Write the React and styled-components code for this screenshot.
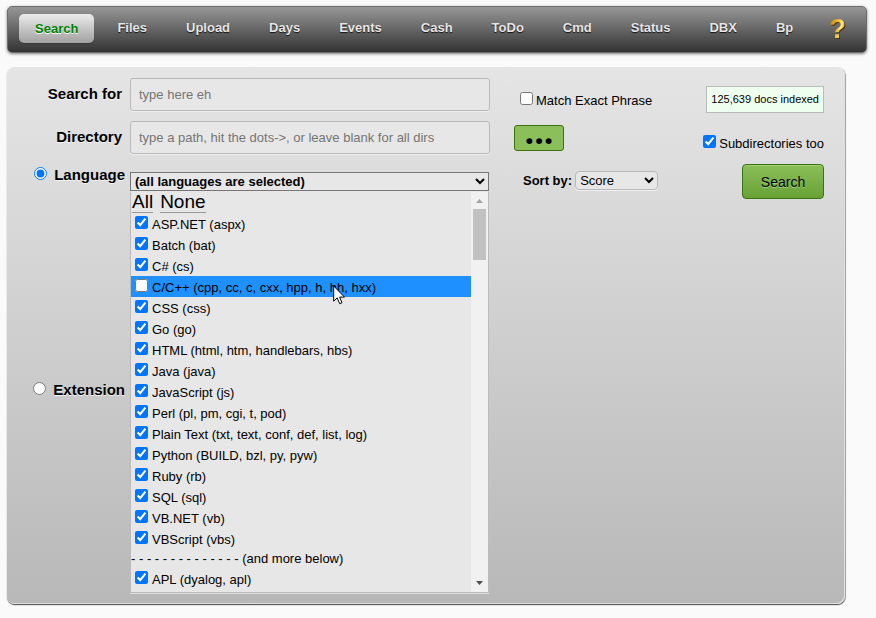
import React, { useState } from "react";
import styled, { createGlobalStyle, css } from "styled-components";

const GlobalStyle = createGlobalStyle`
  *, *::before, *::after { box-sizing: border-box; }
  body {
    margin: 0;
    background: #fafafa;
    color: #000;
    font-family: "Liberation Sans", Arial, sans-serif;
    font-size: 13px;
  }
  button, input, select { font-family: inherit; }
`;

const Page = styled.div`
  padding: 6px 9px 12px 7px;
`;

const Nav = styled.nav`
  display: flex;
  align-items: center;
  gap: 7px;
  height: 47px;
  padding: 0 20px 2px 11px;
  border: 1px solid #6d6b6b;
  border-radius: 5px;
  background: linear-gradient(#979797, #333);
  box-shadow: 0 1px 3px rgba(0, 0, 0, 0.5);
`;

const NavLink = styled.a`
  padding: 0 16px 2px;
  border-radius: 5px;
  color: #e7e5e5;
  font-weight: bold;
  line-height: 27px;
  text-decoration: none;
  text-shadow: 0 1px 1px rgba(0, 0, 0, 0.8);
  ${(p) =>
    p.$active &&
    css`
      padding-bottom: 0;
      background: linear-gradient(#ebebeb, #a1a1a1);
      color: #008000;
      line-height: 29px;
      text-shadow: 0 1px 0 #fff;
      box-shadow: 0 1px 1px rgba(0, 0, 0, 0.2);
    `}
`;

const HelpLink = styled.a`
  margin-left: auto;
  background: linear-gradient(100deg, #c98208 10%, #f0bf38 50%, #ffe98a 65%, #b87406 90%);
  background-clip: text;
  color: transparent;
  filter: drop-shadow(1px 1px 0 #4a3208);
  font-size: 28px;
  font-weight: bold;
  line-height: 32px;
  text-decoration: none;
`;

const Panel = styled.form`
  display: grid;
  grid-template-columns: 122px minmax(160px, 360px) 1fr auto;
  grid-template-rows: 33px 33px 205px 1fr;
  row-gap: 10px;
  margin: 14px 22px 0 0;
  padding: 11px 21px 11px 1px;
  border-radius: 8px;
  background: linear-gradient(#e5e5e5, #b8b8b8);
  box-shadow: inset -1px -1px 0 #dedede, 0 1px 1px #555, 1px 1px 1px #aaa;
`;

const FieldLabel = styled.label`
  padding-right: 8px;
  font-size: 15px;
  font-weight: bold;
  line-height: 32px;
  text-align: right;
  text-shadow: 0 1px 0 #f4f4f4;
`;

const ModeLabel = styled.label`
  display: flex;
  justify-content: flex-end;
  align-items: flex-start;
  gap: 7px;
  padding-right: 5px;
  font-size: 15px;
  font-weight: bold;
  line-height: 22px;
  text-shadow: 0 1px 0 #f4f4f4;
`;

const Radio = styled.input`
  width: 13px;
  height: 13px;
  margin: 3px 0;
`;

const TextInput = styled.input`
  width: 100%;
  height: 33px;
  padding: 0 8px;
  border: 1px solid #b9b9b9;
  border-radius: 3px;
  background: #e7e7e7;
  box-shadow: 0 1px 0 #efefef;
  font-size: 13px;
  &::placeholder { color: #757575; }
`;

const Picker = styled.div`
  grid-row: 3 / span 2;
  grid-column: 2;
  padding: 8px 1px 0 0;
`;

const PickerSelect = styled.select`
  display: block;
  width: 100%;
  height: 19px;
  padding: 0;
  border: 1px solid #767676;
  border-radius: 0;
  background-color: #e7e7e7;
  color: #000;
  font-size: 13px;
  font-weight: bold;
`;

const Menu = styled.div`
  display: flex;
  border: 1px solid #bbb;
  border-top-color: #e7e7e7;
  background: #e7e7e7;
  box-shadow: 0 1px 0 #ddd;
`;

const MenuContent = styled.div`
  flex: 1;
  min-width: 0;
  height: 400px;
  overflow: hidden;
`;

const MenuLinks = styled.div`
  display: flex;
  gap: 7px;
  height: 21px;
  padding: 0 1px;
`;

const MenuLink = styled.a`
  height: 21px;
  border-bottom: 1px solid #999;
  color: #000;
  font-size: 19px;
  line-height: 19px;
  text-decoration: none;
`;

const Option = styled.label`
  position: relative;
  display: flex;
  align-items: flex-start;
  gap: 4px;
  height: 21px;
  padding-left: 4px;
  background: ${(p) => (p.$highlighted ? "#1e90ff" : "transparent")};
  line-height: 23px;
  white-space: nowrap;
`;

const CheckBox = styled.input`
  width: 13px;
  height: 13px;
  margin: 3px 0 0;
  flex: none;
`;

const Divider = styled.div`
  height: 19px;
  line-height: 19px;
  white-space: pre;
`;

const Pointer = styled.svg`
  position: absolute;
  left: 202px;
  top: 9px;
`;

const ScrollBar = styled.div`
  display: flex;
  flex-direction: column;
  align-items: center;
  width: 17px;
  padding: 7px 0;
  background: #f1f1f1;
`;

const ScrollThumb = styled.div`
  width: 13px;
  height: 51px;
  margin: 6px 0 auto;
  background: #c1c1c1;
`;

const Side = styled.div`
  display: flex;
  align-items: flex-start;
  grid-row: ${(p) => p.$row};
  grid-column: ${(p) => p.$col};
  justify-content: ${(p) => (p.$col === 4 ? "flex-end" : "flex-start")};
  padding-top: ${(p) => p.$top || 0}px;
  padding-left: ${(p) => p.$left || 0}px;
`;

const CheckLabel = styled.label`
  display: flex;
  gap: 3px;
  line-height: 21px;
  white-space: nowrap;
`;

const SideCheck = styled(CheckBox)`
  margin: 2px 0 0;
`;

const DocCount = styled.output`
  padding: 0 4px;
  border: 1px solid #bbb;
  background: #efffef;
  font-size: 11px;
  line-height: 25px;
  white-space: nowrap;
`;

const DotsButton = styled.button`
  display: flex;
  align-items: flex-end;
  justify-content: center;
  width: 50px;
  height: 26px;
  padding: 0 0 15px;
  border: 1px solid #3c7312;
  border-radius: 3px;
  background: #8bbf59;
  color: #000;
  font-family: "Open Sans", sans-serif;
  font-size: 34px;
  font-weight: bold;
  line-height: 8px;
`;

const SearchButton = styled.button`
  width: 82px;
  height: 35px;
  padding: 0;
  border: 1px solid #3c7312;
  border-radius: 4px;
  background: linear-gradient(#8bbf59, #68a235);
  box-shadow: inset 0 1px 0 #a0cf72;
  color: #000;
  font-size: 14px;
  text-shadow: 0 1px 0 #a5cf80;
`;

const SortLabel = styled.label`
  display: flex;
  align-items: center;
  gap: 3px;
  font-weight: bold;
  white-space: nowrap;
`;

const SortSelect = styled.select`
  width: 83px;
  height: 19px;
  padding: 0;
  border: 1px solid #b9b9b9;
  border-radius: 4px;
  background-color: #e7e7e7;
  box-shadow: 0 1px 0 #efefef;
  color: #000;
  font-size: 13px;
`;

const tabs = ["Search", "Files", "Upload", "Days", "Events", "Cash", "ToDo", "Cmd", "Status", "DBX", "Bp"];

const languages = [
  "ASP.NET (aspx)",
  "Batch (bat)",
  "C# (cs)",
  "C/C++ (cpp, cc, c, cxx, hpp, h, hh, hxx)",
  "CSS (css)",
  "Go (go)",
  "HTML (html, htm, handlebars, hbs)",
  "Java (java)",
  "JavaScript (js)",
  "Perl (pl, pm, cgi, t, pod)",
  "Plain Text (txt, text, conf, def, list, log)",
  "Python (BUILD, bzl, py, pyw)",
  "Ruby (rb)",
  "SQL (sql)",
  "VB.NET (vb)",
  "VBScript (vbs)",
];

const moreLanguages = ["APL (dyalog, apl)"];
const HIGHLIGHTED = languages[3];

function LanguageOption({ name, checked, onToggle }) {
  const highlighted = name === HIGHLIGHTED;
  return (
    <Option $highlighted={highlighted}>
      <CheckBox type="checkbox" checked={checked} onChange={() => onToggle(name)} />
      <span>{name}</span>
      {highlighted && (
        <Pointer width="13" height="20" viewBox="0 0 13 20" aria-hidden="true">
          <path d="M.7 1v15.2l3.5-3.3 2.5 5.8 2.3-1-2.4-5.6h4.9z" fill="#fff" stroke="#000" />
        </Pointer>
      )}
    </Option>
  );
}

export default function App() {
  const all = [...languages, ...moreLanguages];
  const [selected, setSelected] = useState(all.filter((n) => n !== HIGHLIGHTED));
  const toggle = (name) =>
    setSelected((s) => (s.includes(name) ? s.filter((n) => n !== name) : [...s, name]));
  const choose = (names) => (e) => {
    e.preventDefault();
    setSelected(names);
  };
  const option = (name) => (
    <LanguageOption key={name} name={name} checked={selected.includes(name)} onToggle={toggle} />
  );

  return (
    <>
      <GlobalStyle />
      <Page>
        <Nav>
          {tabs.map((t, i) => (
            <NavLink key={t} href={`#${t}`} $active={i === 0}>{t}</NavLink>
          ))}
          <HelpLink href="#help">?</HelpLink>
        </Nav>

        <Panel onSubmit={(e) => e.preventDefault()}>
          <FieldLabel htmlFor="query">Search for</FieldLabel>
          <TextInput id="query" type="text" placeholder="type here eh" />
          <Side $row={1} $col={3} $top={12} $left={30}>
            <CheckLabel>
              <SideCheck type="checkbox" />
              Match Exact Phrase
            </CheckLabel>
          </Side>
          <Side $row={1} $col={4} $top={8}>
            <DocCount>125,639 docs indexed</DocCount>
          </Side>

          <FieldLabel htmlFor="directory">Directory</FieldLabel>
          <TextInput
            id="directory"
            type="text"
            placeholder="type a path, hit the dots->, or leave blank for all dirs"
          />
          <Side $row={2} $col={3} $top={4} $left={24}>
            <DotsButton type="button">...</DotsButton>
          </Side>
          <Side $row={2} $col={4} $top={12}>
            <CheckLabel>
              <SideCheck type="checkbox" defaultChecked />
              Subdirectories too
            </CheckLabel>
          </Side>

          <ModeLabel>
            <Radio type="radio" name="mode" defaultChecked />
            Language
          </ModeLabel>
          <Picker>
            <PickerSelect aria-label="Language">
              <option>(all languages are selected)</option>
            </PickerSelect>
            <Menu>
              <MenuContent>
                <MenuLinks>
                  <MenuLink href="#all" onClick={choose(all)}>All</MenuLink>
                  <MenuLink href="#none" onClick={choose([])}>None</MenuLink>
                </MenuLinks>
                {languages.map(option)}
                <Divider>- - - - - - - - - - - - - - (and more below)</Divider>
                {moreLanguages.map(option)}
              </MenuContent>
              <ScrollBar aria-hidden="true">
                <svg width="7" height="4"><path d="M0 4 3.5 0 7 4z" fill="#a3a3a3" /></svg>
                <ScrollThumb />
                <svg width="7" height="4"><path d="M0 0h7L3.5 4z" fill="#505050" /></svg>
              </ScrollBar>
            </Menu>
          </Picker>
          <Side $row={3} $col={3} $top={7} $left={33}>
            <SortLabel>
              Sort by:
              <SortSelect>
                <option>Score</option>
              </SortSelect>
            </SortLabel>
          </Side>
          <Side $row={3} $col={4}>
            <SearchButton type="submit">Search</SearchButton>
          </Side>

          <ModeLabel>
            <Radio type="radio" name="mode" />
            Extension
          </ModeLabel>
        </Panel>
      </Page>
    </>
  );
}
